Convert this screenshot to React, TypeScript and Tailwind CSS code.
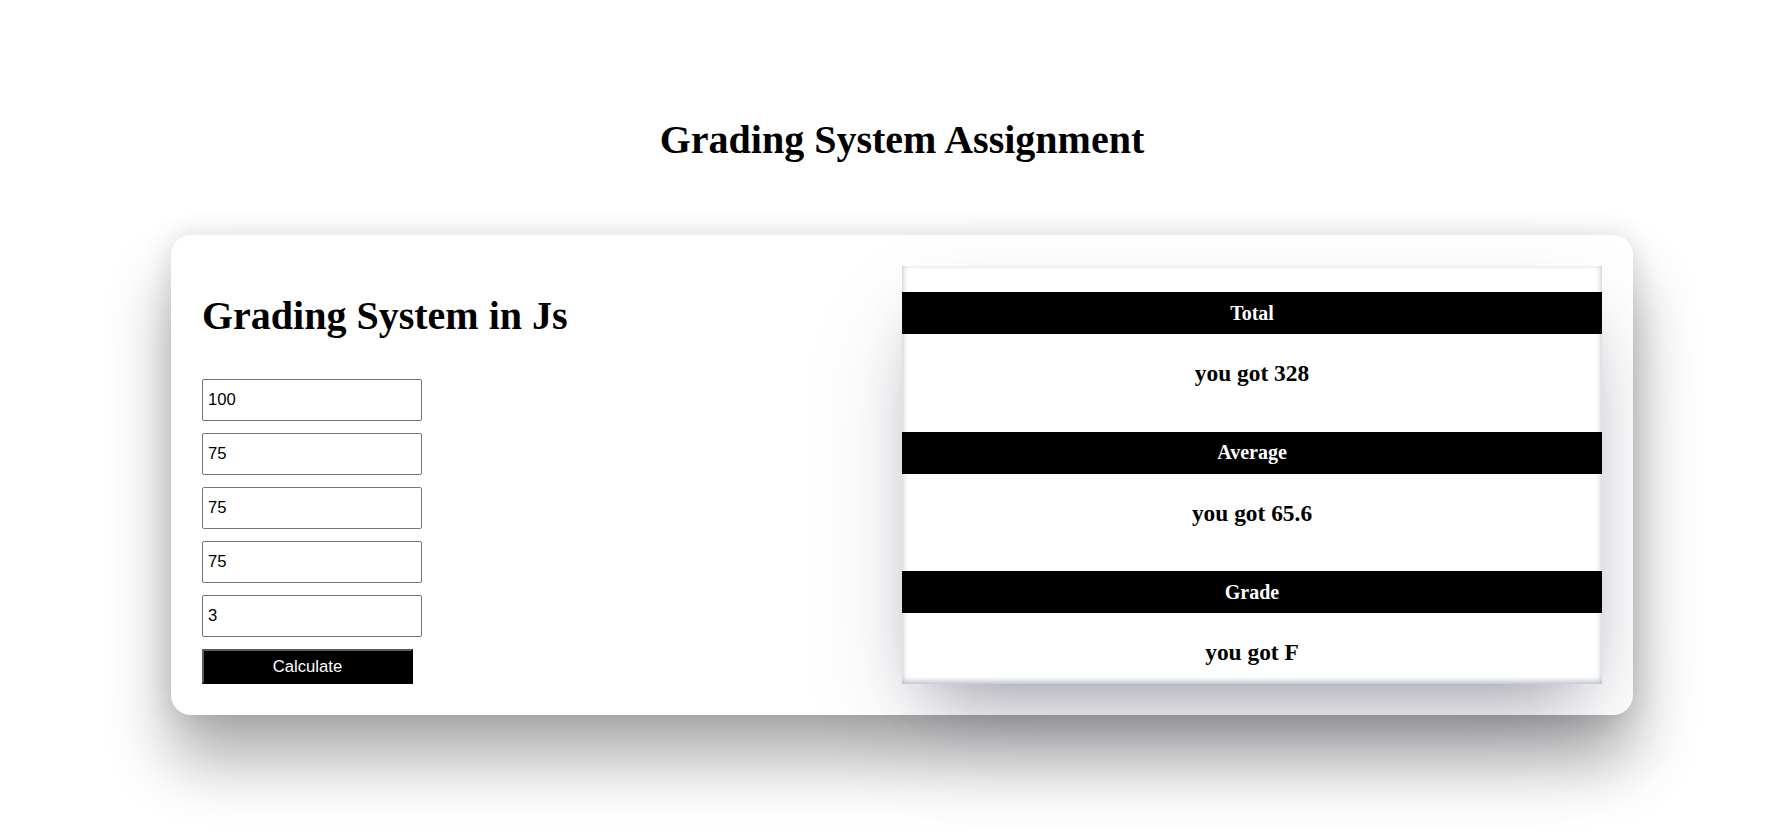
const marks = ['100', '75', '75', '75', '3'];

const results = [
  { label: 'Total', value: 'you got 328' },
  { label: 'Average', value: 'you got 65.6' },
  { label: 'Grade', value: 'you got F' },
];

export default function App() {
  return (
    <div className="min-h-[835px] bg-white pl-[22px] pb-[120px] font-['Liberation_Serif',serif] text-black">
      <h1 className="pt-[117px] text-center text-[40px] leading-[46px] font-bold">
        Grading System Assignment
      </h1>

      <div className="mx-auto mt-[72px] flex w-[1462px] rounded-[20px] bg-white p-[31px] shadow-[0_45px_65px_rgba(0,0,0,0.33),0_0_28px_rgba(0,0,0,0.12)]">
        {/* form side */}
        <div className="flex w-1/2 flex-col">
          <h1 className="mt-[27px] mb-[28px] text-[40px] leading-[46px] font-bold">
            Grading System in Js
          </h1>
          {marks.map((m, i) => (
            <input
              key={i}
              type="text"
              defaultValue={m}
              className="mt-[12px] h-[42px] w-[220px] rounded-[2px] border border-[#767676] bg-white px-[5px] font-['Liberation_Sans',Arial,sans-serif] text-[16.67px] text-black outline-none"
            />
          ))}
          <button className="mt-[12px] h-[35px] w-[211px] border-2 border-t-[#5c5c5c] border-l-[#5c5c5c] border-r-black border-b-black bg-black font-['Liberation_Sans',Arial,sans-serif] text-[16.67px] text-white">
            Calculate
          </button>
        </div>

        {/* result table */}
        <div className="h-[418px] w-1/2 self-start overflow-hidden bg-white pt-[26px] shadow-[0_50px_100px_-20px_rgba(50,50,93,0.25),0_30px_60px_-30px_rgba(0,0,0,0.3),inset_0_-2px_6px_0_rgba(10,37,64,0.35)]">
          {results.map((r) => (
            <div key={r.label}>
              <div className="flex h-[42px] items-center justify-center bg-black text-[20px] leading-[23px] font-bold text-white">
                {r.label}
              </div>
              <div className="h-[97.5px] pt-[26px] text-center">
                <h3 className="text-[23.4px] leading-[27px] font-bold">{r.value}</h3>
              </div>
            </div>
          ))}
        </div>
      </div>
    </div>
  );
}
